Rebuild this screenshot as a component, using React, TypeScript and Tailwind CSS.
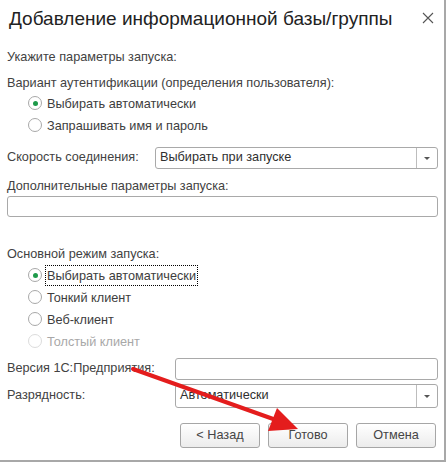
import React from 'react';

const font = { fontFamily: '"Liberation Sans", Arial, sans-serif' };

function Radio({ label, checked, disabled, focused }: { label: string; checked?: boolean; disabled?: boolean; focused?: boolean }) {
  return (
    <div className="h-[22px] flex items-center pl-[21px]">
      <span
        className={
          'w-[14px] h-[14px] rounded-full border bg-white flex items-center justify-center shrink-0 ' +
          (disabled ? 'border-[#dcdcdc]' : 'border-[#a8a8a8]')
        }
      >
        {checked && <span className="w-[5px] h-[5px] rounded-full bg-[#1e9a4a]" />}
      </span>
      <span
        className={
          'ml-[3px] px-[1px] leading-[20px] h-[21px] ' +
          (focused ? 'border border-dotted border-black ' : 'border border-transparent ') +
          (disabled ? 'text-[#a8a8a8]' : 'text-[#3d3d3d]')
        }
      >
        {label}
      </span>
    </div>
  );
}

function Combo({ value, className }: { value: string; className?: string }) {
  return (
    <div className={'flex-1 flex border border-[#a9a9a9] rounded-[3px] bg-white ' + (className ?? '')}>
      <div className="flex-1 pl-[4px] flex items-center text-[#2f2f2f]">{value}</div>
      <div className="w-[21px] border-l border-[#bdbdbd] flex items-center justify-center">
        <span className="w-0 h-0 border-l-[3px] border-r-[3px] border-t-[3px] border-l-transparent border-r-transparent border-t-[#555]" />
      </div>
    </div>
  );
}

function Btn({ label }: { label: string }) {
  return (
    <button className="w-[80px] h-[25px] border border-[#a6a6a6] rounded-[3px] bg-gradient-to-b from-white to-[#ececec] text-[#454545] text-[12.7px]">
      {label}
    </button>
  );
}

export default function App() {
  return (
    <div className="relative w-[446px] h-[462px] bg-white overflow-hidden" style={font}>
      <div className="w-[446px] h-[462px] border-r-2 border-b-2 border-[#a8a8a8] text-[12.7px] text-[#424242]">
        {/* Title */}
        <div className="h-[36px] flex items-center pl-[9px] pr-[10px]">
          <h1 className="flex-1 text-[19px] text-[#222] leading-none">Добавление информационной базы/группы</h1>
          <svg width="12" height="12" viewBox="0 0 12 12">
            <path d="M1 1 L11 11 M11 1 L1 11" stroke="#555" strokeWidth="1.1" />
          </svg>
        </div>

        <div className="pl-[7px] pr-[6px]">
          <div className="mt-[11px] h-[20px] leading-[20px]">Укажите параметры запуска:</div>
          <div className="mt-[7px] h-[18px] leading-[18px]">Вариант аутентификации (определения пользователя):</div>
          <Radio label="Выбирать автоматически" checked />
          <Radio label="Запрашивать имя и пароль" />

          <div className="mt-[11px] h-[22px] flex">
            <div className="w-[148px] flex items-center">Скорость соединения:</div>
            <Combo value="Выбирать при запуске" />
          </div>

          <div className="mt-[7px] h-[20px] leading-[20px]">Дополнительные параметры запуска:</div>
          <div className="h-[21px] border border-[#a9a9a9] rounded-[3px] bg-white" />

          <div className="mt-[27px] h-[20px] leading-[20px]">Основной режим запуска:</div>
          <Radio label="Выбирать автоматически" checked focused />
          <Radio label="Тонкий клиент" />
          <Radio label="Веб-клиент" />
          <Radio label="Толстый клиент" disabled />

          <div className="mt-[6px] h-[22px] flex">
            <div className="w-[168px] flex items-center">Версия 1С:Предприятия:</div>
            <div className="flex-1 border border-[#a9a9a9] rounded-[3px] bg-white" />
          </div>
          <div className="mt-[4px] h-[24px] flex">
            <div className="w-[168px] pt-[1px] leading-[20px]">Разрядность:</div>
            <Combo value="Автоматически" />
          </div>

          <div className="mt-[15px] flex justify-end gap-[8px] pr-[2px]">
            <Btn label="< Назад" />
            <Btn label="Готово" />
            <Btn label="Отмена" />
          </div>
        </div>
      </div>

      {/* red annotation arrow */}
      <svg className="absolute inset-0 pointer-events-none" width="446" height="462">
        <line x1="133" y1="369" x2="276" y2="420" stroke="#e41d1d" strokeWidth="4" strokeLinecap="round" />
        <polygon points="298,429 268,431 277,408" fill="#e41d1d" />
      </svg>
    </div>
  );
}
